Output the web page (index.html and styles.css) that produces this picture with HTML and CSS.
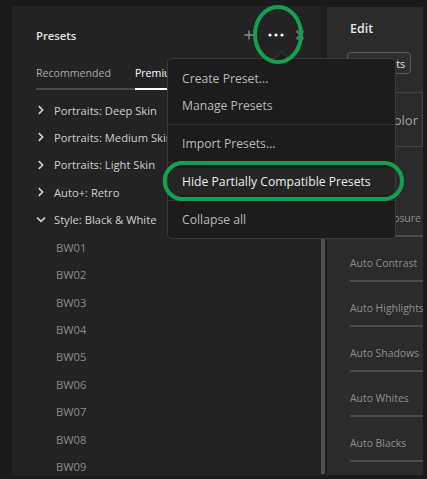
FILE: index.html
```html
<!DOCTYPE html>
<html>
<head>
<meta charset="utf-8">
<link rel="stylesheet" href="styles.css">
</head>
<body>
<div class="app">
  <div class="gutter-left"></div>
  <section class="presets">
    <header class="ph">
      <h1 class="ph-title">Presets</h1>
      <div class="ph-icons">
        <svg class="ic-plus" width="12" height="12" viewBox="0 0 12 12"><path d="M6 1.5V10.5M1.5 6H10.5" stroke="#8c8c8c" stroke-width="1.4" fill="none"/></svg>
        <svg class="ic-dots" width="18" height="6" viewBox="0 0 18 6"><circle cx="3" cy="3" r="1.6" fill="#fff"/><circle cx="9" cy="3" r="1.6" fill="#fff"/><circle cx="15" cy="3" r="1.6" fill="#fff"/></svg>
        <svg class="ic-x" width="10" height="10" viewBox="0 0 10 10"><path d="M1.5 1.5L8.5 8.5M8.5 1.5L1.5 8.5M1.5 1H8.5M1.5 9H8.5" stroke="#7c7c7c" stroke-width="1.2" fill="none"/></svg>
      </div>
    </header>
    <nav class="tabs">
      <span class="tab">Recommended</span>
      <span class="tab active">Premium</span>
    </nav>
    <ul class="tree">
      <li class="row"><svg class="chev" width="18" height="10" viewBox="0 0 18 10"><path d="M2.8 1.2L6.6 5L2.8 8.8" stroke="#cdcdcd" stroke-width="1.7" fill="none"/></svg><span>Portraits: Deep Skin</span></li>
      <li class="row"><svg class="chev" width="18" height="10" viewBox="0 0 18 10"><path d="M2.8 1.2L6.6 5L2.8 8.8" stroke="#cdcdcd" stroke-width="1.7" fill="none"/></svg><span>Portraits: Medium Skin</span></li>
      <li class="row"><svg class="chev" width="18" height="10" viewBox="0 0 18 10"><path d="M2.8 1.2L6.6 5L2.8 8.8" stroke="#cdcdcd" stroke-width="1.7" fill="none"/></svg><span>Portraits: Light Skin</span></li>
      <li class="row"><svg class="chev" width="18" height="10" viewBox="0 0 18 10"><path d="M2.8 1.2L6.6 5L2.8 8.8" stroke="#cdcdcd" stroke-width="1.7" fill="none"/></svg><span>Auto+: Retro</span></li>
      <li class="row"><svg class="chev" width="18" height="10" viewBox="0 0 18 10"><path d="M1 2.6L5 6.4L9 2.6" stroke="#cdcdcd" stroke-width="1.7" fill="none"/></svg><span>Style: Black &amp; White</span></li>
      <li class="row child">BW01</li>
      <li class="row child">BW02</li>
      <li class="row child">BW03</li>
      <li class="row child">BW04</li>
      <li class="row child">BW05</li>
      <li class="row child">BW06</li>
      <li class="row child">BW07</li>
      <li class="row child">BW08</li>
      <li class="row child">BW09</li>
    </ul>
  </section>
  <div class="track"><div class="thumb"></div></div>
  <div class="gap"></div>
  <section class="edit">
    <h2 class="edit-title">Edit</h2>
    <button class="btn"><svg width="10" height="10" viewBox="0 0 10 10"><rect x="1" y="1" width="8" height="8" rx="1.5" stroke="#cfcfcf" stroke-width="1.2" fill="none"/></svg><span>Presets</span></button>
    <div class="colorbox"><span>Color</span></div>
    <div class="spacer"></div>
    <ul class="autos">
      <li>Auto Exposure</li>
      <li>Auto Contrast</li>
      <li>Auto Highlights</li>
      <li>Auto Shadows</li>
      <li>Auto Whites</li>
      <li>Auto Blacks</li>
    </ul>
  </section>
  <div class="gutter-right"></div>

  <div class="menu">
    <div class="menu-arrow"></div>
    <div class="mi">Create Preset...</div>
    <div class="mi">Manage Presets</div>
    <div class="sep"></div>
    <div class="mi">Import Presets...</div>
    <div class="sep"></div>
    <div class="mi hover">Hide Partially Compatible Presets</div>
    <div class="sep"></div>
    <div class="mi">Collapse all</div>
  </div>

  <svg class="ring ring-dots" width="54" height="65" viewBox="0 0 54 65"><ellipse cx="27" cy="32.5" rx="23" ry="27.5" stroke="#13a150" stroke-width="4" fill="none"/></svg>
  <svg class="ring ring-hide" width="248" height="46" viewBox="0 0 248 46"><rect x="4.7" y="5" width="237.3" height="36" rx="18" stroke="#13a150" stroke-width="4" fill="none"/></svg>
</div>
</body>
</html>
```

FILE: styles.css
```css
* { box-sizing: border-box; }
html, body { margin: 0; padding: 0; }
body {
  background: #1b1b1b;
  font-family: "Open Sans", "Noto Sans", sans-serif;
  width: 427px;
  height: 479px;
  overflow: hidden;
}
.app {
  position: relative;
  display: flex;
  width: 427px;
  height: 479px;
  padding: 6px 0 3px 0;
}
.gutter-left { width: 12px; flex: none; }
.gutter-right { width: 4px; flex: none; }
.gap { width: 2px; flex: none; background: #1e1e1e; }

.presets {
  width: 309px;
  flex: none;
  background: #232323;
  padding-left: 24px;
  display: flex;
  flex-direction: column;
  overflow: hidden;
}
.ph {
  height: 58px;
  flex: none;
  display: flex;
  align-items: center;
}
.ph-title {
  margin: 0;
  font-size: 11.3px;
  font-weight: 600;
  color: #e2e2e2;
}
.ph-icons {
  margin-left: auto;
  display: flex;
  align-items: center;
  padding-right: 16px;
}
.ph-icons svg { display: block; }
.ic-dots { margin-left: 12px; }
.ic-x { margin-left: 10px; }

.tabs {
  display: flex;
  gap: 24px;
  border-bottom: 2px solid #4a4a4a;
  margin-right: 24px;
  flex: none;
}
.tab {
  font-size: 10.6px;
  line-height: 18px;
  padding-bottom: 6px;
  color: #a8a8a8;
}
.tab.active {
  color: #ffffff;
  border-bottom: 2px solid #ffffff;
  margin-bottom: -2px;
}

.tree {
  list-style: none;
  margin: 0;
  padding: 14.5px 0 0 0;
  display: flex;
  flex-direction: column;
  gap: 16.45px;
}
.row {
  height: 11px;
  line-height: 11px;
  flex: none;
  display: flex;
  align-items: center;
  font-size: 11.2px;
  color: #cfcfcf;
  white-space: nowrap;
}
.chev { display: block; flex: none; }
.row.child {
  padding-left: 20px;
  color: #8b8b8b;
}

.track {
  width: 4px;
  flex: none;
  background: #1f1f1f;
  display: flex;
  flex-direction: column;
  justify-content: flex-end;
}
.thumb {
  height: 282px;
  background: #505050;
  margin-bottom: 2px;
}

.edit {
  width: 96px;
  flex: none;
  background: #2b2b2b;
  margin-top: 1px;
  margin-bottom: 1px;
  display: flex;
  flex-direction: column;
  overflow: hidden;
}
.edit-title {
  margin: 0;
  height: 43px;
  flex: none;
  display: flex;
  align-items: center;
  padding-left: 23px;
  font-size: 12.5px;
  font-weight: 600;
  color: #e6e6e6;
}
.btn {
  margin: 2px 0 0 20px;
  width: 64px;
  height: 22px;
  flex: none;
  border: 1px solid #5a5a5a;
  border-radius: 4px;
  background: #2f2f2f;
  display: flex;
  align-items: center;
  gap: 4px;
  padding: 0 0 0 6px;
  font-family: inherit;
  font-size: 10.8px;
  color: #e2e2e2;
}
.btn svg { display: block; }
.colorbox {
  margin-top: 18px;
  height: 55px;
  flex: none;
  border-top: 1.5px solid #444;
  border-bottom: 1.5px solid #444;
  border-right: 1.5px solid #444;
  display: flex;
  align-items: center;
  justify-content: flex-end;
  padding-right: 4px;
  font-size: 13px;
  color: #a2a2a2;
}
.spacer { height: 45px; flex: none; }
.autos {
  list-style: none;
  margin: 0 0 0 23px;
  padding: 0;
}
.autos li {
  height: 45px;
  padding-top: 18px;
  line-height: 16px;
  font-size: 10.4px;
  color: #8e8e8e;
  border-bottom: 2px solid #4a4a4a;
  white-space: nowrap;
}

.menu {
  position: absolute;
  left: 167px;
  top: 58px;
  width: 229px;
  background: #1c1c1c;
  border: 1px solid #3a3a3a;
  border-radius: 5px;
  padding: 6px 0 5px 0;
  z-index: 5;
}
.menu-arrow {
  position: absolute;
  left: 107.5px;
  top: -6.5px;
  width: 11px;
  height: 11px;
  background: #1c1c1c;
  border-left: 1px solid #3a3a3a;
  border-top: 1px solid #3a3a3a;
  transform: rotate(45deg);
}
.mi {
  position: relative;
  height: 27px;
  line-height: 27px;
  padding-left: 14px;
  font-size: 12.2px;
  color: #b9b9b9;
  white-space: nowrap;
}
.mi.hover {
  background: #252525;
  color: #ececec;
}
.sep {
  height: 1px;
  margin: 5px 0;
  background: #333333;
}

.ring {
  position: absolute;
  z-index: 10;
  display: block;
}
.ring-dots { left: 251px; top: 2px; }
.ring-hide { left: 160px; top: 158px; }
```
